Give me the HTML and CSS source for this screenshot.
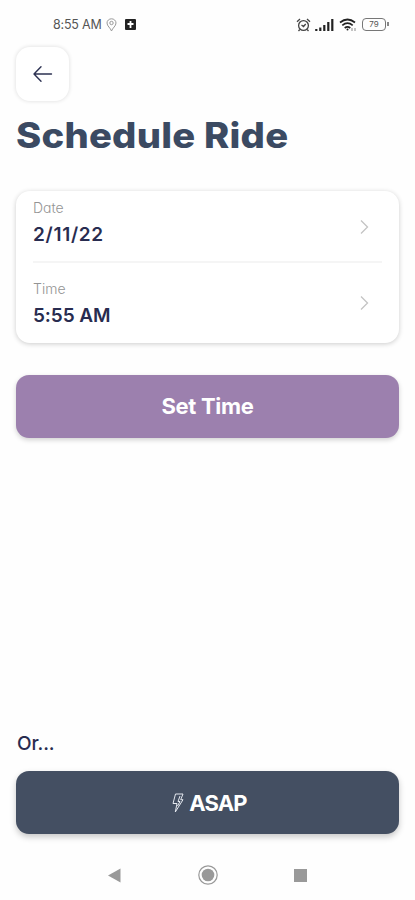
FILE: index.html
```html
<!DOCTYPE html>
<html lang="en">
<head>
<meta charset="utf-8">
<meta name="viewport" content="width=device-width, initial-scale=1">
<title>Schedule Ride</title>
<link rel="stylesheet" href="styles.css">
</head>
<body>
<div class="screen">
  <div class="status">
    <span class="clock">8:55 AM</span>
    <svg class="pin" width="11" height="14" viewBox="0 0 11 14" fill="none" stroke="#999" stroke-width="1"><path d="M5.5 13C4.500 10 1 8 1 5a4.500 4.200 0 0 1 9 0C10 8 6.500 10 5.500 13Z"/><circle cx="5.500" cy="5" r="1.700"/></svg>
    <svg class="plus" width="11" height="11" viewBox="0 0 11 11"><rect width="11" height="11" rx="1" fill="#222"/><path d="M5.500 2v7M2.500 5h6" stroke="#fff" stroke-width="1.800"/></svg>
    <svg class="alarm" width="15" height="14" viewBox="0 0 15 14" fill="none" stroke="#444" stroke-width="1.300"><circle cx="7.500" cy="7.500" r="4.900"/><path d="M1 3.700 4 1M14 3.700 11 1M3.800 11.500 2.500 13M11.200 11.500l1.300 1.500M5.500 7l2 1.500L9.700 6"/></svg>
    <svg class="signal" width="19" height="12" viewBox="0 0 19 12" stroke="#222" stroke-width="2.200"><path d="M1.300 12V10M5.300 12V8.500M9.300 12V6M13.300 12V3M17.300 12V0"/></svg>
    <svg class="wifi" width="18" height="14" viewBox="0 0 18 14" fill="none" stroke="#222" stroke-width="1.700"><path d="M1 4.500Q8.500-1.500 16 4.500M3.300 7.300Q8.500 3 13.700 7.300M5.700 10Q8.500 7.700 11.300 10"/><circle cx="8.500" cy="11.500" r="1" fill="#222" stroke="none"/><path d="M13 10v3M16 10v3" stroke="#888" stroke-width="1"/></svg>
    <span class="battery">79</span>
  </div>

  <button class="back" aria-label="Back">
    <svg width="20" height="18" viewBox="0 0 20 18" fill="none" stroke="#2d3252" stroke-width="1.400" stroke-linecap="round" stroke-linejoin="round"><path d="M18.500 9H1.500M8 1.700 1 9l7 7.300"/></svg>
  </button>
  <h1>Schedule Ride</h1>

  <div class="card">
    <div class="row">
      <div><div class="label">Date</div><div class="value date">2/11/22</div></div>
      <svg class="chevron" width="9" height="16" viewBox="0 0 9 16"><path d="m1 1.500 6.500 6.500L1 14.500"/></svg>
    </div>
    <div class="row time-row">
      <div><div class="label">Time</div><div class="value time">5:55 AM</div></div>
      <svg class="chevron" width="9" height="16" viewBox="0 0 9 16"><path d="m1 1.500 6.500 6.500L1 14.500"/></svg>
    </div>
  </div>

  <button class="action set"><span>Set Time</span></button>

  <div class="or">Or...</div>
  <button class="action asap">
    <svg width="12" height="20" viewBox="0 0 12 20" fill="none" stroke="#e4e8ef" stroke-width="1" stroke-linejoin="round"><path d="M3.500 1H11L8.700 6.700H11L3.300 19 5 10.500H1Z"/><path d="M8 3 6 8.500h2L5.500 13"/></svg>
    <span>ASAP</span>
  </button>

  <div class="nav">
    <svg width="13" height="15" viewBox="0 0 13 15"><path d="M0 7.500 12.500.5v14Z" fill="#999"/></svg>
    <svg width="20" height="20" viewBox="0 0 20 20"><circle cx="10" cy="10" r="9.200" fill="none" stroke="#999" stroke-width="1.200"/><circle cx="10" cy="10" r="6.300" fill="#999"/></svg>
    <svg width="13" height="13" viewBox="0 0 13 13"><path d="M0 0h13v13H0Z" fill="#999"/></svg>
  </div>
</div>
</body>
</html>
```
FILE: styles.css
```css
* { box-sizing: border-box; }
body { margin: 0; background: #fefefe; font-family: Inter, "Liberation Sans", sans-serif; color: #282c50; }
button { border: 0; padding: 0; font-family: inherit; }
svg { display: block; flex: none; }
.screen { width: 415px; height: 900px; padding: 0 16px; display: flex; flex-direction: column; overflow: hidden; }

.status { height: 47px; padding: 2px 13px 0 37px; display: flex; align-items: center; flex: none; }
.clock { width: 49px; font-size: 12.5px; color: #555; letter-spacing: -.2px; white-space: nowrap; }
.pin { margin-left: 4px; }
.plus { margin-left: 8px; }
.alarm { margin-left: auto; }
.signal { margin-left: 4px; }
.wifi { margin-left: 5px; }
.battery { position: relative; width: 24px; height: 13px; margin-left: 5px; border: 1.5px solid #777; border-radius: 4px; font-size: 8px; line-height: 10px; text-align: center; color: #555; }
.battery::after { content: ""; position: absolute; right: -4px; top: 3px; width: 2px; height: 4px; background: #888; }

.back { width: 53px; height: 54px; border-radius: 14px; background: #fff; box-shadow: 0 0 4px rgba(0,0,0,.14); display: flex; align-items: center; justify-content: center; flex: none; }
h1 { align-self: flex-start; margin: 13px 0 0; height: 42px; font-size: 35px; line-height: 42px; font-weight: 800; letter-spacing: .2px; color: #3b4a62; white-space: nowrap; flex: none; transform: scaleX(1.092); transform-origin: left; }

.card { height: 152px; margin-top: 35px; padding: 0 17px; border-radius: 14px; background: #fff; box-shadow: 0 1px 5px rgba(0,0,0,.2); flex: none; }
.row { height: 72px; padding: 8px 13px 0 0; display: flex; justify-content: space-between; border-bottom: 2px solid #f5f5f5; }
.time-row { height: 80px; padding-top: 17px; border: 0; }
.label { font-size: 14px; line-height: 18px; font-weight: 300; color: #949494; font-feature-settings: "cv11"; }
.value { margin-top: 6px; font-size: 19px; line-height: 24px; font-weight: 600; white-space: nowrap; }
.date { letter-spacing: .7px; }
.time { letter-spacing: -.1px; }
.chevron { margin-top: 20px; fill: none; stroke: #c4c4c4; stroke-width: 1.3; }
.time-row .chevron { margin-top: 15px; }

.action { width: 383px; height: 63px; border-radius: 13px; color: #fff; font-size: 22px; line-height: 28px; font-weight: 700; display: flex; align-items: center; justify-content: center; flex: none; }
.action span { position: relative; top: -1px; }
.set { margin-top: 32px; letter-spacing: -.3px; background: #9c80ae; box-shadow: 0 2px 5px rgba(0,0,0,.18); }
.or { margin-top: auto; height: 24px; padding-left: 1px; font-size: 19px; line-height: 24px; font-weight: 500; letter-spacing: -.1px; flex: none; }
.asap { margin-top: 15px; gap: 5px; padding-left: 4px; letter-spacing: -.8px; background: #444f62; box-shadow: 0 3px 6px rgba(0,0,0,.22); }
.asap span { top: 0; }
.nav { height: 66px; padding: 16px 92px 0; display: flex; align-items: center; justify-content: space-between; flex: none; }
```
